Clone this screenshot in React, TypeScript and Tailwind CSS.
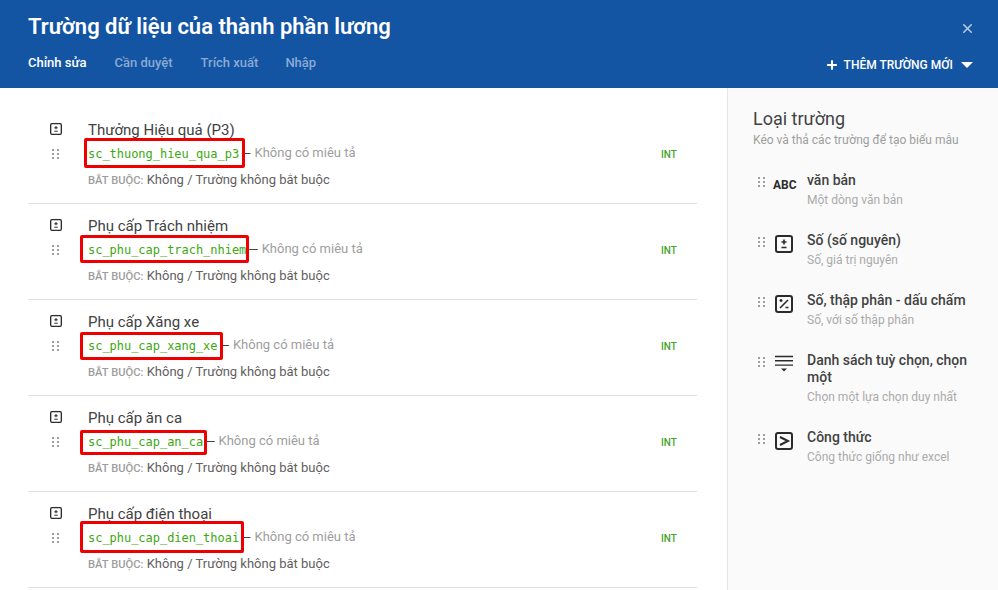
import { Plus, X } from 'lucide-react';

// red annotation boxes are not uniform in the picture, so each row has its own
const fields = [
    { title: 'Thưởng Hiệu quả (P3)', code: 'sc_thuong_hieu_qua_p3', box: 'left-[-4px] top-[-7px] h-[30px] w-[161px]' },
    { title: 'Phụ cấp Trách nhiệm', code: 'sc_phu_cap_trach_nhiem', box: 'left-[-8px] top-[-6px] h-[28px] w-[169px]' },
    { title: 'Phụ cấp Xăng xe', code: 'sc_phu_cap_xang_xe', box: 'left-[-8px] top-[-5px] h-[28px] w-[143px]' },
    { title: 'Phụ cấp ăn ca', code: 'sc_phu_cap_an_ca', box: 'left-[-8px] top-[-3px] h-[25px] w-[127px]' },
    { title: 'Phụ cấp điện thoại', code: 'sc_phu_cap_dien_thoai', box: 'left-[-8px] top-[-8px] h-[32px] w-[164px]' },
];

const Grip = () => (
    <svg width="8" height="10" viewBox="0 0 8 10" className="fill-[#9e9e9e]">
        <rect x="0" y="0" width="2" height="2" />
        <rect x="5" y="0" width="2" height="2" />
        <rect x="0" y="4" width="2" height="2" />
        <rect x="5" y="4" width="2" height="2" />
        <rect x="0" y="8" width="2" height="2" />
        <rect x="5" y="8" width="2" height="2" />
    </svg>
);

const IntIcon = ({ size = 18 }: { size?: number }) => (
    <svg width={size} height={size} viewBox="0 0 18 18" fill="none" stroke="#2b2b2b">
        <rect x="1" y="1" width="16" height="16" rx="2" strokeWidth="2" />
        <path d="M9 4.5v5M6.5 7h5M6.5 12.5h5" strokeWidth="1.6" />
    </svg>
);

const DecimalIcon = () => (
    <svg width="18" height="18" viewBox="0 0 18 18" fill="none" stroke="#2b2b2b">
        <rect x="1" y="1" width="16" height="16" rx="2" strokeWidth="2" />
        <path d="M5 13 13 5" strokeWidth="1.6" />
        <path d="M4.5 5.5h3M6 4v3M10.5 12.5h3" strokeWidth="1.4" />
    </svg>
);

const ListIcon = () => (
    <svg width="18" height="18" viewBox="0 0 18 18" fill="none" stroke="#2b2b2b">
        <path d="M0 1.5h18M0 5.8h18M0 10.1h18" strokeWidth="1.4" />
        <path d="M6 13.5h6l-3 3z" fill="#2b2b2b" stroke="none" />
    </svg>
);

const FormulaIcon = () => (
    <svg width="18" height="18" viewBox="0 0 18 18" fill="none" stroke="#2b2b2b">
        <rect x="1" y="1" width="16" height="16" rx="2" strokeWidth="2" />
        <path d="M5 5l8 4-8 4" strokeWidth="2" />
    </svg>
);

const types = [
    { icon: <span className="mt-[2px] text-[12px] font-bold text-[#2b2b2b]">ABC</span>, title: 'văn bản', desc: 'Một dòng văn bản' },
    { icon: <span className="ml-[2px] flex"><IntIcon /></span>, title: 'Số (số nguyên)', desc: 'Số, giá trị nguyên' },
    { icon: <span className="ml-[2px] flex"><DecimalIcon /></span>, title: 'Số, thập phân - dấu chấm', desc: 'Số, với số thập phân' },
    { icon: <span className="ml-[2px] flex"><ListIcon /></span>, title: 'Danh sách tuỳ chọn, chọn một', desc: 'Chọn một lựa chọn duy nhất' },
    { icon: <span className="ml-[2px] flex"><FormulaIcon /></span>, title: 'Công thức', desc: 'Công thức giống như excel' },
];

const FieldRow = ({ title, code, box }: (typeof fields)[number]) => (
    <div className="flex h-[96px] items-start border-b border-[#e0e0e0] pt-[13px]">
        <div className="flex w-[60px] shrink-0 flex-col items-center pr-[4px]">
            <div className="mt-[2px] flex">
                <IntIcon size={12} />
            </div>
            <div className="mt-[14px] flex">
                <Grip />
            </div>
        </div>
        <div className="flex-1">
            <div className="text-[15px] leading-[18px] text-[#424242]">{title}</div>
            <div className="mt-[5px] flex h-[20px] items-center">
                <div className="relative font-['DejaVu_Sans_Mono',monospace] text-[12px] tracking-[-0.03px] text-[#3da80f]">
                    {code}
                    <span className={`absolute rounded-[2px] border-[3px] border-[#ee0000] ${box}`} />
                </div>
                <span className="ml-[2px] text-[13px] text-[#9e9e9e]">
                    <span className="text-[#424242]">—</span>{' '}
                    <span className="inline-block -translate-y-px">Không có miêu tả</span>
                </span>
            </div>
            <div className="mt-[7px] text-[13px] leading-[18px] text-[#616161]">
                <span className="text-[11.2px] font-medium text-[#9e9e9e]">BẮT BUỘC:</span> Không / Trường không bắt buộc
            </div>
        </div>
        <div className="mt-[26px] w-[36px] shrink-0 text-[10px] font-medium text-[#46a326]">INT</div>
    </div>
);

export default function App() {
    return (
        <div className="flex h-[590px] w-[998px] flex-col overflow-hidden bg-white font-['Roboto',sans-serif]">
            <header className="relative flex h-[88px] shrink-0 flex-col justify-between bg-[#1355a3] pt-[13px] pr-[25px] pb-[16px] pl-[28px]">
                <h1 className="text-[22px] leading-[28px] font-semibold text-white">Trường dữ liệu của thành phần lương</h1>
                <div className="flex items-center justify-between">
                    <nav className="flex gap-[28px] text-[13px] font-medium text-[#8aaad2]">
                        <span className="text-white">Chỉnh sửa</span>
                        <span>Cần duyệt</span>
                        <span>Trích xuất</span>
                        <span className="ml-[-1px]">Nhập</span>
                    </nav>
                    <button className="flex translate-y-[3px] items-center text-[12px] font-medium text-white">
                        <Plus size={14} strokeWidth={3.5} className="mr-[5px]" />
                        THÊM TRƯỜNG MỚI
                        <span className="ml-[8px] border-x-[6px] border-t-[6px] border-x-transparent border-t-white" />
                    </button>
                </div>
                <X size={15} strokeWidth={2.5} className="absolute top-[21px] right-[23px] text-[#b6cae3]" />
            </header>
            <div className="flex min-h-0 flex-1">
                <main className="w-[727px] shrink-0 pt-[20px] pr-[30px] pl-[28px]">
                    {fields.map((f) => (
                        <FieldRow key={f.code} {...f} />
                    ))}
                </main>
                <aside className="flex-1 border-l border-[#e6e6e6] bg-[#fafafa] pt-[19px] pr-[24px] pl-[25px]">
                    <h2 className="text-[18px] leading-[24px] text-[#424242]">Loại trường</h2>
                    <p className="mt-[1px] text-[12px] leading-[16px] text-[#9e9e9e]">Kéo và thả các trường để tạo biểu mẫu</p>
                    <div className="mt-[24px] flex flex-col gap-[24px]">
                        {types.map((t) => (
                            <div key={t.title} className="flex items-start">
                                <div className="mt-[5px] flex w-[20px] shrink-0 pl-[5px]">
                                    <Grip />
                                </div>
                                <div className="mt-[2px] flex h-[20px] w-[34px] shrink-0 items-center">{t.icon}</div>
                                <div className="flex-1">
                                    <div className="text-[14px] leading-[17px] font-medium text-[#424242]">{t.title}</div>
                                    <div className="mt-[3px] text-[12px] leading-[16px] text-[#aaaaaa]">{t.desc}</div>
                                </div>
                            </div>
                        ))}
                    </div>
                </aside>
            </div>
        </div>
    );
}
